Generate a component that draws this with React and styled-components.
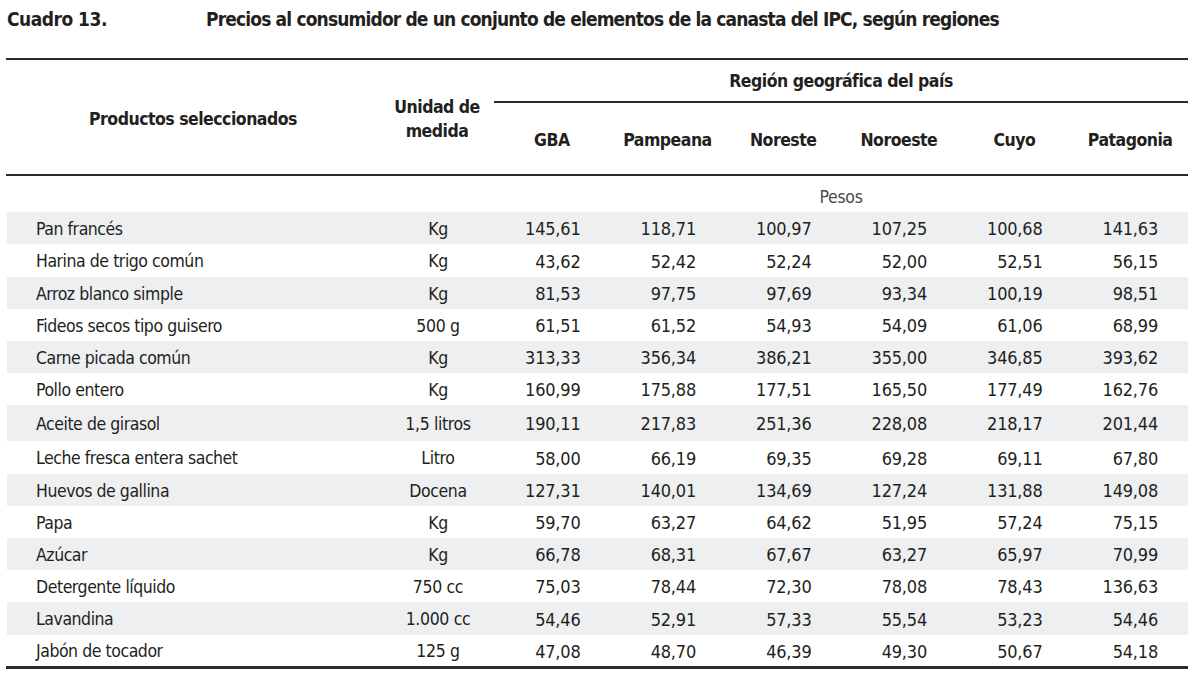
import React from "react";
import styled, { createGlobalStyle } from "styled-components";

const FONT = '"Liberation Sans Narrow", "DejaVu Sans Condensed", "Roboto Condensed", "Liberation Sans", sans-serif';
const COLS = "374px 114px repeat(6, 1fr)";

const Global = createGlobalStyle`
  *, *::before, *::after {
    box-sizing: border-box;
  }
  body {
    margin: 0;
    background: #fff;
    font-family: ${FONT};
    color: #231f20;
  }
`;

const Page = styled.div`
  width: 1182px;
  margin-left: 6px;
`;

const Caption = styled.div`
  display: flex;
  align-items: center;
  height: 37px;
  font-size: 19px;
  font-weight: bold;
  letter-spacing: -0.85px;
  span:first-child {
    width: 200px;
    padding-left: 1px;
    letter-spacing: -0.5px;
  }
`;

const Head = styled.div`
  margin-top: 21px;
  display: grid;
  grid-template-columns: ${COLS};
  grid-template-rows: 43px 71px;
  border-top: 2px solid #2b2b2b;
  border-bottom: 2px solid #2b2b2b;
  font-weight: bold;
  font-size: 17.5px;
  letter-spacing: -0.5px;
`;

const HeadCell = styled.div`
  display: flex;
  align-items: center;
  justify-content: center;
  text-align: center;
  line-height: 24px;
  grid-row: ${(p) => p.$row || "auto"};
  grid-column: ${(p) => p.$col || "auto"};
  padding-top: ${(p) => p.$pt || 0}px;
`;

const RegionCell = styled(HeadCell)`
  border-bottom: 2px solid #2b2b2b;
  padding-top: 0;
`;

const UnitRow = styled.div`
  display: grid;
  grid-template-columns: ${COLS};
  align-items: center;
  height: 36px;
  font-size: 17.5px;
  letter-spacing: -0.3px;
  color: #4a4a4a;
  span {
    grid-column: 3 / 9;
    text-align: center;
    padding-top: 5px;
  }
`;

const Row = styled.div`
  display: grid;
  grid-template-columns: ${COLS};
  align-items: center;
  height: ${(p) => p.$h}px;
  background: ${(p) => (p.$shade ? "#eeeff1" : "#fff")};
  font-size: 17.5px;
  margin-left: 1px;
  padding-top: 1px;
`;

const Name = styled.div`
  padding-left: 29px;
  letter-spacing: -0.45px;
`;

const Measure = styled.div`
  text-align: center;
  letter-spacing: -0.35px;
`;

const Num = styled.div`
  text-align: right;
  padding-right: 30px;
  font-size: 18px;
  letter-spacing: -0.2px;
`;

const Bottom = styled.div`
  border-top: 3px solid #2b2b2b;
`;

const data = [
  ["Pan francés", "Kg", ["145,61", "118,71", "100,97", "107,25", "100,68", "141,63"]],
  ["Harina de trigo común", "Kg", ["43,62", "52,42", "52,24", "52,00", "52,51", "56,15"]],
  ["Arroz blanco simple", "Kg", ["81,53", "97,75", "97,69", "93,34", "100,19", "98,51"]],
  ["Fideos secos tipo guisero", "500 g", ["61,51", "61,52", "54,93", "54,09", "61,06", "68,99"]],
  ["Carne picada común", "Kg", ["313,33", "356,34", "386,21", "355,00", "346,85", "393,62"]],
  ["Pollo entero", "Kg", ["160,99", "175,88", "177,51", "165,50", "177,49", "162,76"]],
  ["Aceite de girasol", "1,5 litros", ["190,11", "217,83", "251,36", "228,08", "218,17", "201,44"]],
  ["Leche fresca entera sachet", "Litro", ["58,00", "66,19", "69,35", "69,28", "69,11", "67,80"]],
  ["Huevos de gallina", "Docena", ["127,31", "140,01", "134,69", "127,24", "131,88", "149,08"]],
  ["Papa", "Kg", ["59,70", "63,27", "64,62", "51,95", "57,24", "75,15"]],
  ["Azúcar", "Kg", ["66,78", "68,31", "67,67", "63,27", "65,97", "70,99"]],
  ["Detergente líquido", "750 cc", ["75,03", "78,44", "72,30", "78,08", "78,43", "136,63"]],
  ["Lavandina", "1.000 cc", ["54,46", "52,91", "57,33", "55,54", "53,23", "54,46"]],
  ["Jabón de tocador", "125 g", ["47,08", "48,70", "46,39", "49,30", "50,67", "54,18"]],
];

const heights = [32, 33, 32, 32, 32, 32, 36, 33, 32, 32, 32, 32, 33, 31];
const regions = ["GBA", "Pampeana", "Noreste", "Noroeste", "Cuyo", "Patagonia"];

export default function App() {
  return (
    <Page>
      <Global />
      <Caption>
        <span>Cuadro 13.</span>
        <span>Precios al consumidor de un conjunto de elementos de la canasta del IPC, según regiones</span>
      </Caption>
      <Head>
        <HeadCell $row="1 / 3" $col="1" $pt={3}>Productos seleccionados</HeadCell>
        <HeadCell $row="1 / 3" $col="2" $pt={3}>Unidad de<br />medida</HeadCell>
        <RegionCell $row="1" $col="3 / 9">Región geográfica del país</RegionCell>
        {regions.map((r, i) => (
          <HeadCell key={r} $row="2" $col={`${i + 3}`} $pt={3}>{r}</HeadCell>
        ))}
      </Head>
      <UnitRow>
        <span>Pesos</span>
      </UnitRow>
      {data.map(([name, unit, vals], i) => (
        <Row key={name} $h={heights[i]} $shade={i % 2 === 0}>
          <Name>{name}</Name>
          <Measure>{unit}</Measure>
          {vals.map((v, j) => (
            <Num key={j}>{v}</Num>
          ))}
        </Row>
      ))}
      <Bottom />
    </Page>
  );
}
